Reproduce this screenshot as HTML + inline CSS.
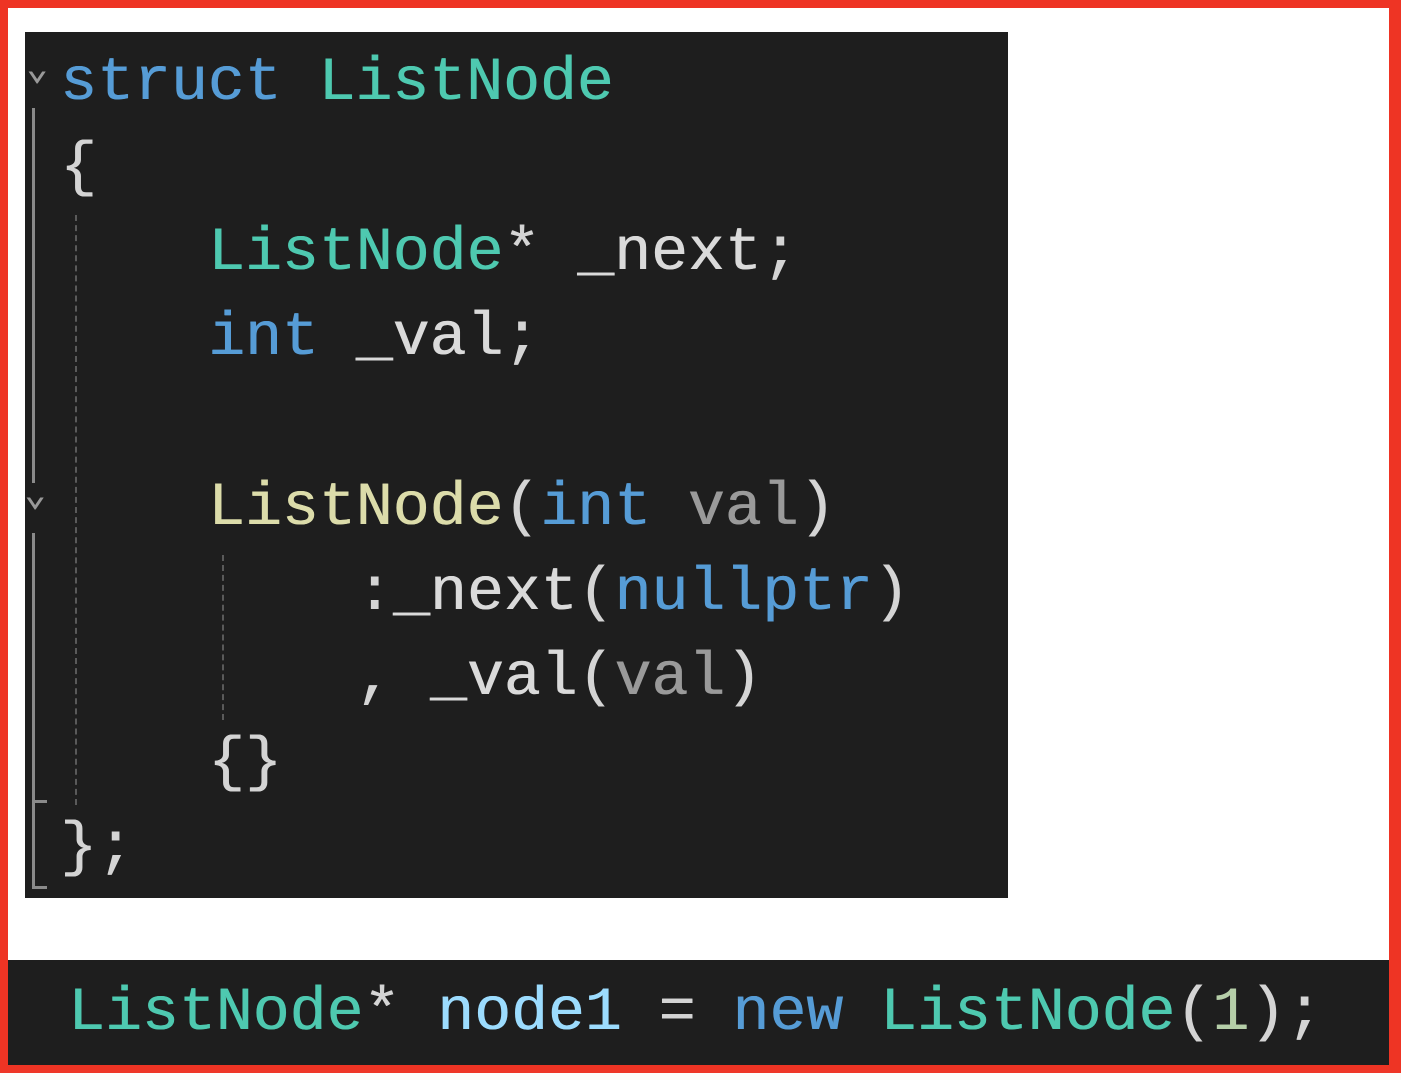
<!DOCTYPE html>
<html><head><meta charset="utf-8"><style>
html,body{margin:0;padding:0}
body{width:1401px;height:1080px;background:#fdfbf8;position:relative;overflow:hidden}
.frame{position:absolute;left:0;top:0;width:1381px;height:1057px;border:solid #ee3424;border-width:8px 12px 8px 8px;box-sizing:content-box;background:#fff}
.code{position:absolute;left:25px;top:32px;width:983px;height:866px;background:#1e1e1e}
.bar{position:absolute;left:8px;top:960px;width:1381px;height:105px;background:#1e1e1e}
.l{position:absolute;font-family:"Liberation Mono",monospace;font-size:61.5px;line-height:1;white-space:pre;color:#d4d4d4;text-shadow:0.6px 0 0 currentColor}
.k{color:#569cd6}.t{color:#4ec9b0}.f{color:#dcdcaa}.p{color:#9a9a9a}.m{color:#dadada}.v{color:#9cdcfe}.n{color:#b5cea8}
.g{position:absolute;background:#8a8a8a}
.d{position:absolute;width:0;border-left:2px dashed #5a5a5a}
</style></head><body>
<div class="frame"></div>
<div class="code"></div>
<div class="bar"></div>
<div class="g" style="left:32px;top:108px;width:3px;height:375px"></div>
<div class="g" style="left:32px;top:533px;width:3px;height:355px"></div>
<div class="g" style="left:32px;top:800px;width:15px;height:3px"></div>
<div class="g" style="left:32px;top:886px;width:15px;height:3px"></div>
<div class="d" style="left:75px;top:215px;height:590px"></div>
<div class="d" style="left:222px;top:555px;height:165px"></div>
<div class="l" style="left:26px;top:52px;font-size:36px;color:#999">⌄</div>
<div class="l" style="left:24px;top:478px;font-size:36px;color:#999">⌄</div>
<div class="l" style="left:60px;top:53px"><span class="k">struct</span> <span class="t">ListNode</span></div>
<div class="l" style="left:60px;top:138px">{</div>
<div class="l" style="left:208px;top:223px"><span class="t">ListNode</span>* <span class="m">_next</span>;</div>
<div class="l" style="left:208px;top:308px"><span class="k">int</span> <span class="m">_val</span>;</div>
<div class="l" style="left:208px;top:478px"><span class="f">ListNode</span>(<span class="k">int</span> <span class="p">val</span>)</div>
<div class="l" style="left:356px;top:563px">:<span class="m">_next</span>(<span class="k">nullptr</span>)</div>
<div class="l" style="left:356px;top:648px">, <span class="m">_val</span>(<span class="p">val</span>)</div>
<div class="l" style="left:208px;top:733px">{}</div>
<div class="l" style="left:60px;top:818px">};</div>
<div class="l" style="left:68px;top:983px"><span class="t">ListNode</span>* <span class="v">node1</span> = <span class="k">new</span> <span class="t">ListNode</span>(<span class="n">1</span>);</div>
</body></html>
